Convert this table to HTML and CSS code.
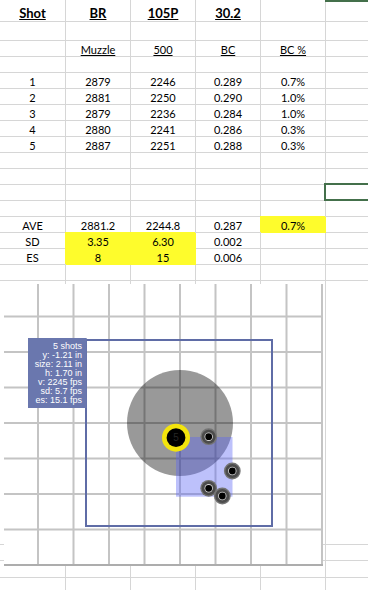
FILE: index.html
```html
<!DOCTYPE html>
<html lang="en">
<head>
<meta charset="utf-8">
<title>Shot sheet</title>
<link rel="stylesheet" href="styles.css">
</head>
<body>
<div class="page">
  <div class="sheet">
    <div class="hd"><u>Shot</u></div><div class="hd"><u>BR</u></div><div class="hd"><u>105P</u></div><div class="hd"><u>30.2</u></div><div></div><div class="sel-top"></div>
    <div></div><div></div><div></div><div></div><div></div><div></div>
    <div></div><div><u>Muzzle</u></div><div><u>500</u></div><div><u>BC</u></div><div><u>BC %</u></div><div></div>
    <div></div><div></div><div></div><div></div><div></div><div></div>
    <div>1</div><div>2879</div><div>2246</div><div>0.289</div><div>0.7%</div><div></div>
    <div>2</div><div>2881</div><div>2250</div><div>0.290</div><div>1.0%</div><div></div>
    <div>3</div><div>2879</div><div>2236</div><div>0.284</div><div>1.0%</div><div></div>
    <div>4</div><div>2880</div><div>2241</div><div>0.286</div><div>0.3%</div><div></div>
    <div>5</div><div>2887</div><div>2251</div><div>0.288</div><div>0.3%</div><div></div>
    <div></div><div></div><div></div><div></div><div></div><div></div>
    <div></div><div></div><div></div><div></div><div></div><div></div>
    <div></div><div></div><div></div><div></div><div></div><div class="sel"></div>
    <div></div><div></div><div></div><div></div><div></div><div></div>
    <div>AVE</div><div>2881.2</div><div>2244.8</div><div>0.287</div><div class="yl">0.7%</div><div></div>
    <div>SD</div><div class="yl">3.35</div><div class="yl">6.30</div><div>0.002</div><div></div><div></div>
    <div>ES</div><div class="yl">8</div><div class="yl">15</div><div>0.006</div><div></div><div></div>
    <div></div><div></div><div></div><div></div><div></div><div></div>
    <div></div><div></div><div></div><div></div><div></div><div></div>
    <div></div><div></div><div></div><div></div><div></div><div></div>
    <div></div><div></div><div></div><div></div><div></div><div></div>
    <div></div><div></div><div></div><div></div><div></div><div></div>
  </div>

  <svg class="target" width="319" height="282" viewBox="0 0 319 282" xmlns="http://www.w3.org/2000/svg">
    <rect width="319" height="282" fill="#ffffff"/>
    <g stroke="#c4c4c4" stroke-width="2">
      <line x1="34" y1="0" x2="34" y2="281"/>
      <line x1="69.5" y1="0" x2="69.5" y2="281"/>
      <line x1="105" y1="0" x2="105" y2="281"/>
      <line x1="140.5" y1="0" x2="140.5" y2="281"/>
      <line x1="176" y1="0" x2="176" y2="281"/>
      <line x1="211.5" y1="0" x2="211.5" y2="281"/>
      <line x1="247" y1="0" x2="247" y2="281"/>
      <line x1="282.5" y1="0" x2="282.5" y2="281"/>
      <line x1="318" y1="0" x2="318" y2="281"/>
      <line x1="0" y1="32.5" x2="319" y2="32.5"/>
      <line x1="0" y1="68" x2="319" y2="68"/>
      <line x1="0" y1="103.5" x2="319" y2="103.5"/>
      <line x1="0" y1="139" x2="319" y2="139"/>
      <line x1="0" y1="174.5" x2="319" y2="174.5"/>
      <line x1="0" y1="210" x2="319" y2="210"/>
      <line x1="0" y1="245.5" x2="319" y2="245.5"/>
    </g>
    <line x1="0" y1="281" x2="319" y2="281" stroke="#adadad" stroke-width="2"/>
    <circle cx="176" cy="139" r="53" fill="#000" fill-opacity="0.4"/>
    <rect x="172" y="153" width="56.5" height="59.7" fill="rgb(90,100,245)" fill-opacity="0.4"/>
    <rect x="82" y="56" width="186" height="186" fill="none" stroke="#5f6ca6" stroke-width="2"/>
    <rect x="24" y="54" width="58.7" height="70" fill="#6a77ae"/>
    <g class="info" fill="#ffffff" text-anchor="end">
      <text x="78" y="65">5 shots</text>
      <text x="78" y="74">y: -1.21 in</text>
      <text x="78" y="83">size: 2.11 in</text>
      <text x="78" y="92">h: 1.70 in</text>
      <text x="78" y="101">v: 2245 fps</text>
      <text x="78" y="110">sd: 5.7 fps</text>
      <text x="78" y="119">es: 15.1 fps</text>
    </g>
    <circle cx="172" cy="153.7" r="14" fill="#f3e40c"/>
    <circle cx="172" cy="153.7" r="9.4" fill="#000"/>
    <text class="num" x="172" y="157.3" text-anchor="middle" fill="#262626">5</text>
    <g>
      <circle cx="204.7" cy="152.7" r="8.4" fill="#747474"/>
      <circle cx="204.7" cy="152.7" r="7" fill="#4c4c4c"/>
      <circle cx="204.7" cy="152.7" r="4.2" fill="#d8d8d8"/>
      <circle cx="204.7" cy="152.7" r="3.4" fill="#000"/>
    </g>
    <g>
      <circle cx="228.3" cy="187" r="8.4" fill="#747474"/>
      <circle cx="228.3" cy="187" r="7" fill="#4c4c4c"/>
      <circle cx="228.3" cy="187" r="4.2" fill="#d8d8d8"/>
      <circle cx="228.3" cy="187" r="3.4" fill="#000"/>
    </g>
    <g>
      <circle cx="204.7" cy="204.3" r="8.4" fill="#747474"/>
      <circle cx="204.7" cy="204.3" r="7" fill="#4c4c4c"/>
      <circle cx="204.7" cy="204.3" r="4.2" fill="#d8d8d8"/>
      <circle cx="204.7" cy="204.3" r="3.4" fill="#000"/>
    </g>
    <g>
      <circle cx="218.3" cy="212" r="8.4" fill="#747474"/>
      <circle cx="218.3" cy="212" r="7" fill="#4c4c4c"/>
      <circle cx="218.3" cy="212" r="4.2" fill="#d8d8d8"/>
      <circle cx="218.3" cy="212" r="3.4" fill="#000"/>
    </g>
  </svg>
</div>
</body>
</html>
```

FILE: styles.css
```css
html, body {
  margin: 0;
  padding: 0;
  background: #ffffff;
  width: 368px;
  height: 590px;
  overflow: hidden;
}

.page {
  position: relative;
  width: 368px;
  height: 590px;
  overflow: hidden;
}

.sheet {
  display: grid;
  grid-template-columns: 66px 65px 65px 65px 65px 65px;
  grid-template-rows: 22px 19px repeat(15, 16px) 264px 16px 17px 16px;
  width: 391px;
  font-family: Lato, "Liberation Sans", sans-serif;
  font-size: 11px;
  line-height: 13px;
  color: #000;
}

.sheet > div {
  position: relative;
  box-sizing: border-box;
  border-right: 1px solid #d6d6d6;
  border-bottom: 1px solid #d6d6d6;
  display: flex;
  align-items: flex-end;
  justify-content: center;
  white-space: nowrap;
}

.sheet u {
  text-decoration: underline;
  text-underline-offset: 1px;
}

.sheet > .hd {
  font-size: 13px;
  font-weight: 700;
  line-height: 15px;
}

.sheet > .yl {
  background: #fefc2c;
  border-right-color: #fefc2c;
  border-bottom-color: #fefc2c;
  box-shadow: -1px -1px 0 0 #fefc2c;
}

.sheet > .sel::after {
  content: "";
  position: absolute;
  top: -2px;
  left: -2px;
  right: -20px;
  bottom: -1px;
  box-sizing: border-box;
  border: 2px solid #44704b;
}

.sheet > .sel-top::after {
  content: "";
  position: absolute;
  top: 0;
  left: -1px;
  right: -20px;
  height: 2px;
  background: #44704b;
}

.target {
  position: absolute;
  left: 4px;
  top: 284px;
  display: block;
}

.target .info text {
  font-family: "Liberation Sans", Arial, sans-serif;
  font-size: 9px;
}

.target .num {
  font-family: "Liberation Sans", Arial, sans-serif;
  font-size: 10px;
}
```
